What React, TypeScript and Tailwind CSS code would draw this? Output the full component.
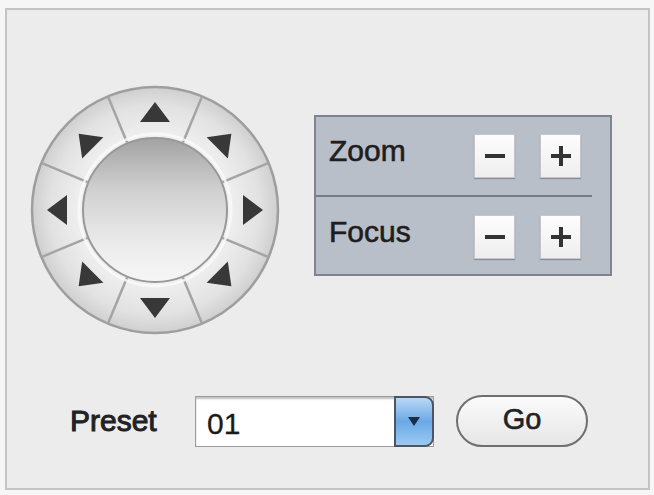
import { useState } from 'react';

const ARROW_ANGLES = [0, 45, 90, 135, 180, 225, 270, 315];
const DIVIDER_ANGLES = [22.5, 67.5, 112.5, 157.5, 202.5, 247.5, 292.5, 337.5];

function polar(r: number, deg: number) {
  const a = ((deg - 90) * Math.PI) / 180;
  return { x: 125 + r * Math.cos(a), y: 125 + r * Math.sin(a) };
}

function PanTiltPad() {
  return (
    <svg width="252" height="252" viewBox="-1 -1 252 252" className="shrink-0">
      <defs>
        <radialGradient id="ring" cx="50%" cy="50%" r="50%">
          <stop offset="55%" stopColor="#f2f2f2" />
          <stop offset="85%" stopColor="#e2e2e2" />
          <stop offset="100%" stopColor="#cfcfcf" />
        </radialGradient>
        <linearGradient id="dome" x1="0" y1="0" x2="0" y2="1">
          <stop offset="0%" stopColor="#a2a2a2" />
          <stop offset="35%" stopColor="#cfcfcf" />
          <stop offset="75%" stopColor="#ececec" />
          <stop offset="100%" stopColor="#f6f6f6" />
        </linearGradient>
      </defs>
      <circle cx="125" cy="125" r="123" fill="url(#ring)" stroke="#9e9e9e" strokeWidth="2.5" />
      {DIVIDER_ANGLES.map((deg) => {
        const a = polar(73, deg);
        const b = polar(123, deg);
        return <line key={deg} x1={a.x} y1={a.y} x2={b.x} y2={b.y} stroke="#a4a4a4" strokeWidth="2.5" />;
      })}
      <circle cx="125" cy="125" r="76" fill="none" stroke="#fafafa" strokeWidth="3" opacity="0.8" />
      <circle cx="125" cy="125" r="72" fill="url(#dome)" stroke="#989898" strokeWidth="2" />
      {ARROW_ANGLES.map((deg) => (
        <polygon
          key={deg}
          points="110,37 140,37 125,17"
          fill="#383838"
          transform={`rotate(${deg} 125 125)`}
        />
      ))}
    </svg>
  );
}

function StepButton({ sign }: { sign: '-' | '+' }) {
  return (
    <button className="relative flex h-[44px] w-[41px] items-center justify-center border border-[#c4c6ca] bg-gradient-to-b from-[#fdfdfd] to-[#eeeeee] shadow-[0_1px_1px_rgba(0,0,0,0.25)]">
      <span className="absolute h-[4px] w-[20px] bg-[#333]" />
      {sign === '+' ? <span className="absolute h-[20px] w-[4px] bg-[#333]" /> : null}
    </button>
  );
}

function LensRow({ label, last }: { label: string; last?: boolean }) {
  return (
    <div className={`flex h-[80px] items-center pl-[13px] ${last ? '' : 'border-b-2 border-[#767b84] mr-[18px]'}`}>
      <span className="w-[145px] pb-[10px] text-[30px] leading-none text-[#1e1e1e] [-webkit-text-stroke:0.6px_#1e1e1e]">{label}</span>
      <div className="flex gap-[25px]">
        <StepButton sign="-" />
        <StepButton sign="+" />
      </div>
    </div>
  );
}

export default function App() {
  const [preset] = useState('01');

  return (
    <div className="h-[495px] w-[654px] bg-[#f6f6f6] pl-[5px] pr-[4px] pt-[8px] pb-[5px] font-['Liberation_Sans',Arial,sans-serif]">
      <div className="h-full w-full border-2 border-[#c4c4c4] bg-[#ececec]">
        <div className="flex items-start pl-[22px] pt-[74px]">
          <PanTiltPad />
          <div className="ml-[33px] mt-[31px] h-[161px] w-[298px] border-2 border-[#7e848e] bg-[#b9bfc9]">
            <LensRow label="Zoom" />
            <LensRow label="Focus" last />
          </div>
        </div>

        <div className="mt-[59px] flex items-center pl-[63px]">
          <span className="w-[125px] text-[30px] leading-none text-[#222] [-webkit-text-stroke:1px_#222]">Preset</span>
          <div className="flex h-[51px] w-[239px] border border-[#9c9c9c] bg-white shadow-[inset_0_2px_2px_rgba(0,0,0,0.25)]">
            <span className="flex flex-1 items-end pb-[7px] pl-[11px] text-[30px] leading-none text-[#1a1a1a] [-webkit-text-stroke:0.3px_#1a1a1a]">{preset}</span>
            <span className="-my-px -mr-px flex w-[40px] items-center justify-center rounded-r-[9px] border-2 border-[#4b5563] bg-gradient-to-b from-[#b9d8f5] via-[#6aa9e6] to-[#9cc9f2]">
              <svg width="12" height="9" viewBox="0 0 12 9">
                <polygon points="0,0 12,0 6,9" fill="#1e2b44" />
              </svg>
            </span>
          </div>
          <button className="ml-[22px] flex h-[52px] w-[132px] items-center justify-center rounded-full border-2 border-[#6f6f6f] bg-gradient-to-b from-[#fbfbfb] to-[#e6e6e6] pb-[4px] text-[29px] leading-none text-[#222] [-webkit-text-stroke:0.6px_#222]">
            Go
          </button>
        </div>
      </div>
    </div>
  );
}
